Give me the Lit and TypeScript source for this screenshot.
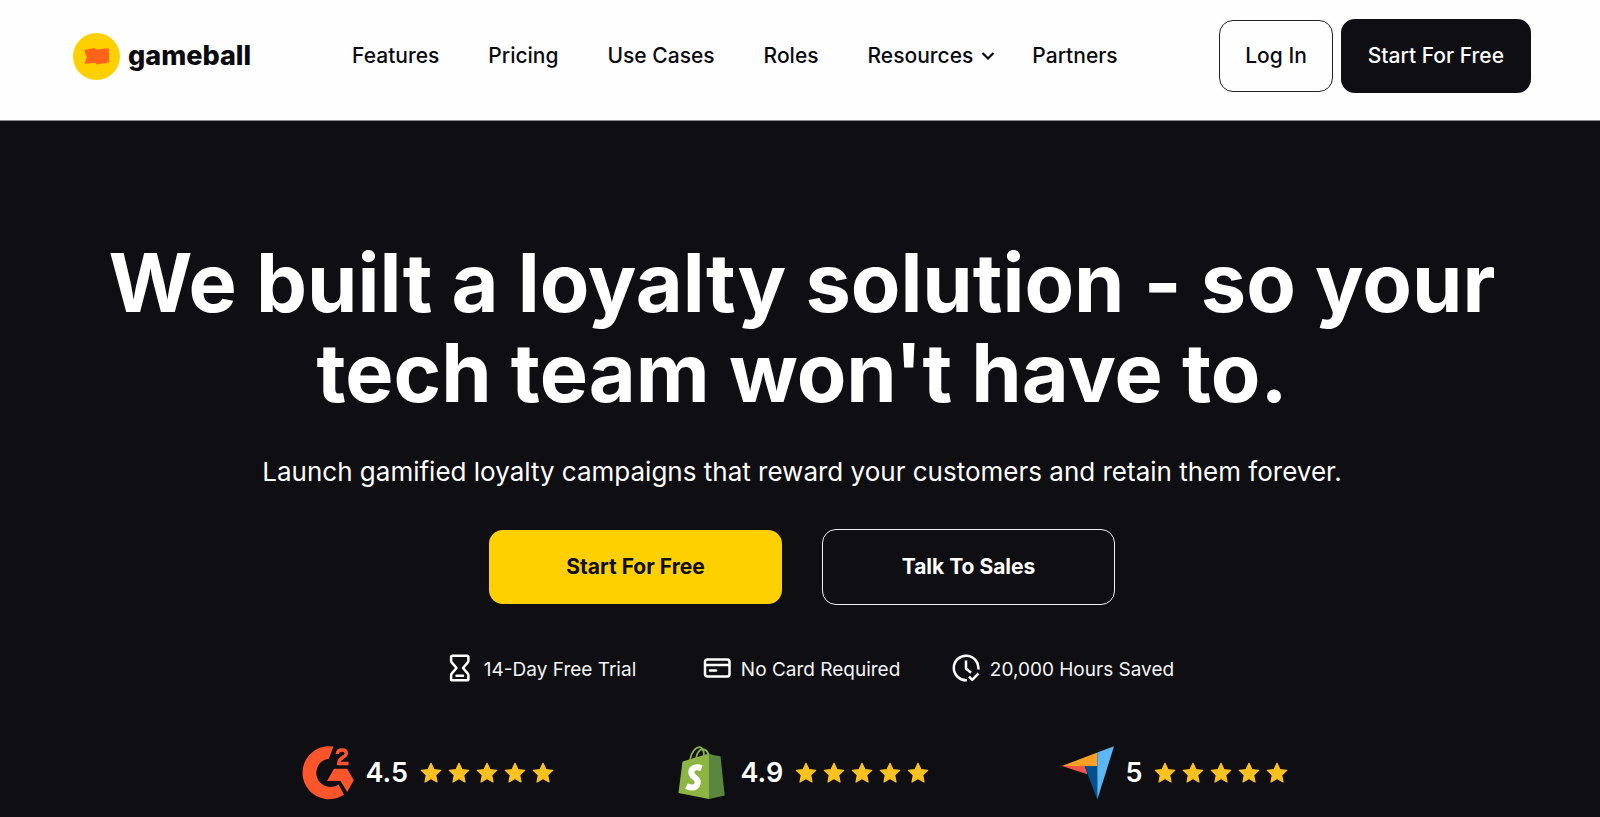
import { LitElement, html, css, svg } from "lit";
import { customElement } from "lit/decorators.js";

const flagLogo = svg`<svg class="mark" viewBox="0 0 47 47" aria-hidden="true">
  <circle cx="23.500" cy="23.500" r="23.500" fill="#ffd000"/>
  <path fill="#ff6418" d="M11.200 17l10.600-2 1 1.400 13-1.200.4 14.300-12.400 2-1.600-1.700-10.700.9 2.300-6.700z"/>
</svg>`;

const g2Logo = svg`<svg class="brand" viewBox="0 0 52 54" aria-hidden="true">
  <path fill="#ff552c" d="M31.500.6A26.500 26.500 0 1 0 42 48.600L36.500 38.500A14.200 14.200 0 1 1 26.800 12.700z"/>
  <path fill="#ff552c" d="M32 22.800h13.200L51.800 34.300 45.200 46l-6.600-11H25z"/>
  <path fill="none" stroke="#ff552c" stroke-width="3.400" d="M35.300 8c.2-2.800 2-4 4.700-4 2.600 0 4.300 1.200 4.300 3.200 0 1.900-1.200 2.900-3.400 4.100-2.800 1.600-4 3-4.200 6.200H46.500"/>
</svg>`;

const bagLogo = svg`<svg class="brand" viewBox="0 0 52 54" aria-hidden="true">
  <g fill="none" stroke="#8db543" stroke-width="1.800">
    <path d="M13 14C14 6 19 1 23 1.200c3 .5 4 4 4 9"/>
    <path d="M19 12.500c1-6 4-9.500 8-9 3 .5 4 3 4.500 5.500"/>
  </g>
  <path fill="#8db543" d="M5.500 15.500L32 7.500V53L1.500 47z"/>
  <path fill="#5a863e" d="M32 7.500l4 1.500 7.500 1.300L47.700 49.500 32 53z"/>
  <path fill="none" stroke="#fff" stroke-width="6" d="M24.500 22.200c-5.500-2.200-10.200-.4-10.200 4 0 5.800 7.400 4.800 6.400 10.800-.8 4.600-5.200 6-11.200 3"/>
</svg>`;

const kiteLogo = svg`<svg class="brand" viewBox="0 0 52 54" aria-hidden="true">
  <path fill="#ffa024" d="M0 20L35.300 6.500V20z"/>
  <path fill="#f4574a" d="M0 20h23l2.500 8.200z"/>
  <path fill="#03508f" d="M22.500 20h12.800V53.500z"/>
  <path fill="#5cb8f5" d="M35.300 6.500L52 .2 35.300 53.500z"/>
</svg>`;

const star = svg`<svg class="star" viewBox="0 0 22 22" aria-hidden="true">
  <path fill="#ffc11f" stroke="#ffc11f" stroke-width="1.200" stroke-linejoin="round" d="M11 1.300l2.900 6.300 6.800.8-5 4.700 1.300 6.900-6-3.400-6 3.400 1.300-6.900-5-4.700 6.800-.8z"/>
</svg>`;

const hourglass = svg`<svg class="icon" viewBox="0 0 28 28" aria-hidden="true">
  <g fill="none" stroke="#fff" stroke-width="2.500" stroke-linejoin="round" stroke-linecap="round">
    <path d="M6.500 1.700h14.500q1.400 0 1.400 1.400v3.600q0 1-.6 1.700L17 14l4.800 5.600q.6.700.6 1.700v3.600q0 1.400-1.400 1.400H6.500q-1.400 0-1.400-1.400v-3.600q0-1 .6-1.700L10.500 14 5.700 8.400q-.6-.7-.6-1.700V3.100q0-1.400 1.400-1.400z"/>
    <path d="M10.500 21.800h6.500"/>
  </g></svg>`;

const card = svg`<svg class="icon" viewBox="0 0 28 28" aria-hidden="true">
  <g fill="none" stroke="#fff" stroke-width="2.500">
    <rect x="2" y="5.500" width="24.500" height="17" rx="2.500"/><path d="M2 11h24"/><path stroke-linecap="round" d="M7 16.500h6"/>
  </g></svg>`;

const clock = svg`<svg class="icon" viewBox="0 0 28 28" aria-hidden="true">
  <g fill="none" stroke="#fff" stroke-width="2.500" stroke-linejoin="round">
    <path d="M15 26.200A12.300 12.300 0 1 1 26.300 15.500"/><path d="M14 6.500v8l5 4.200M17 22.700l3.200 3.200 6.300-6.400"/>
  </g></svg>`;

@customElement("app-root")
export class AppRoot extends LitElement {
  static styles = css`
    :host { display: block; min-height: 100vh; background: #0f0e13; color: #fff; font-family: Inter, sans-serif; }
    * { box-sizing: border-box; }
    a { color: inherit; text-decoration: none; }
    ul { list-style: none; margin: 0; padding: 0; }
    button { font: inherit; cursor: pointer; }
    .header { display: flex; align-items: center; height: 121px; padding: 0 69px 8px 73px; background: #fefefe; color: #0b0a10; border-bottom: 1px solid #8a8a8c; }
    .logo { display: flex; align-items: center; gap: 8px; font-size: 27px; line-height: 40px; font-weight: 800; }
    .mark { width: 47px; height: 47px; }
    .nav { display: flex; align-items: center; gap: 49px; margin-left: 101px; font-size: 21px; font-weight: 500; line-height: 32px; }
    .menu { display: flex; align-items: center; gap: 8px; padding: 0; border: 0; background: none; color: inherit; margin-right: -12px; }
    .chevron { width: 14px; height: 10px; }
    .actions { display: flex; align-items: center; gap: 8px; margin-left: auto; font-size: 21px; font-weight: 500; line-height: 32px; }
    .login { padding: 19px 25px; border: 1px solid #222; border-radius: 14px; background: none; color: inherit; }
    .signup { padding: 21px 27px; border: 0; border-radius: 14px; background: #0f0e13; color: #fff; }
    .hero { display: flex; flex-direction: column; align-items: center; padding: 117px 24px 16px 28px; }
    .title { margin: 0; font-size: 81px; line-height: 90px; font-weight: 700; text-align: center; }
    .lead { margin: 34px 0 0; font-size: 26px; line-height: 40px; text-align: center; }
    .cta { display: flex; align-items: center; gap: 40px; margin-top: 37px; font-size: 21px; line-height: 32px; font-weight: 700; }
    .primary, .secondary { width: 293px; border-radius: 14px; }
    .primary { padding: 21px 0; border: 0; background: #ffd000; color: #0f0e13; }
    .secondary { padding: 21px 0; border: 1px solid #f0f0f2; background: none; color: #fff; }
    .perks { display: grid; grid-template-columns: 257px 249px auto; margin-top: 49px; padding-left: 16px; font-size: 19px; line-height: 32px; color: #f6f6f8; }
    .perk { display: flex; align-items: center; gap: 10px; }
    .icon { width: 28px; height: 28px; margin-bottom: 4px; }
    .ratings { display: grid; grid-template-columns: 375px 385px auto; margin-top: 60px; padding-right: 14px; font-size: 27px; line-height: 40px; font-weight: 600; }
    .rating { display: flex; align-items: center; gap: 12px; }
    .brand { width: 52px; height: 54px; }
    .stars { display: flex; gap: 6px; }
    .star { width: 22px; height: 22px; }
  `;

  render() {
    const ratings = [
      { logo: g2Logo, name: "G2", score: "4.5" },
      { logo: bagLogo, name: "Shopify", score: "4.9" },
      { logo: kiteLogo, name: "Capterra", score: "5" },
    ];
    const perks = [
      { icon: hourglass, label: "14-Day Free Trial" },
      { icon: card, label: "No Card Required" },
      { icon: clock, label: "20,000 Hours Saved" },
    ];
    return html`
      <header class="header">
        <a class="logo" href="#">${flagLogo}<span>gameball</span></a>
        <nav class="nav">
          <a href="#">Features</a>
          <a href="#">Pricing</a>
          <a href="#">Use Cases</a>
          <a href="#">Roles</a>
          <button class="menu" type="button">Resources
            <svg class="chevron" viewBox="0 0 14 10" aria-hidden="true"><path fill="none" stroke="currentColor" stroke-width="2.200" d="M1.500 2l5.500 5.500L12.500 2"/></svg>
          </button>
          <a href="#">Partners</a>
        </nav>
        <div class="actions">
          <button class="login" type="button">Log In</button>
          <button class="signup" type="button">Start For Free</button>
        </div>
      </header>
      <main class="hero">
        <h1 class="title">We built a loyalty solution - so your<br />tech team won't have to.</h1>
        <p class="lead">Launch gamified loyalty campaigns that reward your customers and retain them forever.</p>
        <div class="cta">
          <button class="primary" type="button">Start For Free</button>
          <button class="secondary" type="button">Talk To Sales</button>
        </div>
        <ul class="perks">
          ${perks.map((p) => html`<li class="perk">${p.icon}<span>${p.label}</span></li>`)}
        </ul>
        <ul class="ratings">
          ${ratings.map(
            (r) => html`<li class="rating" title=${r.name}>${r.logo}<span>${r.score}</span><span class="stars">${[1, 2, 3, 4, 5].map(() => star)}</span></li>`
          )}
        </ul>
      </main>
    `;
  }
}
